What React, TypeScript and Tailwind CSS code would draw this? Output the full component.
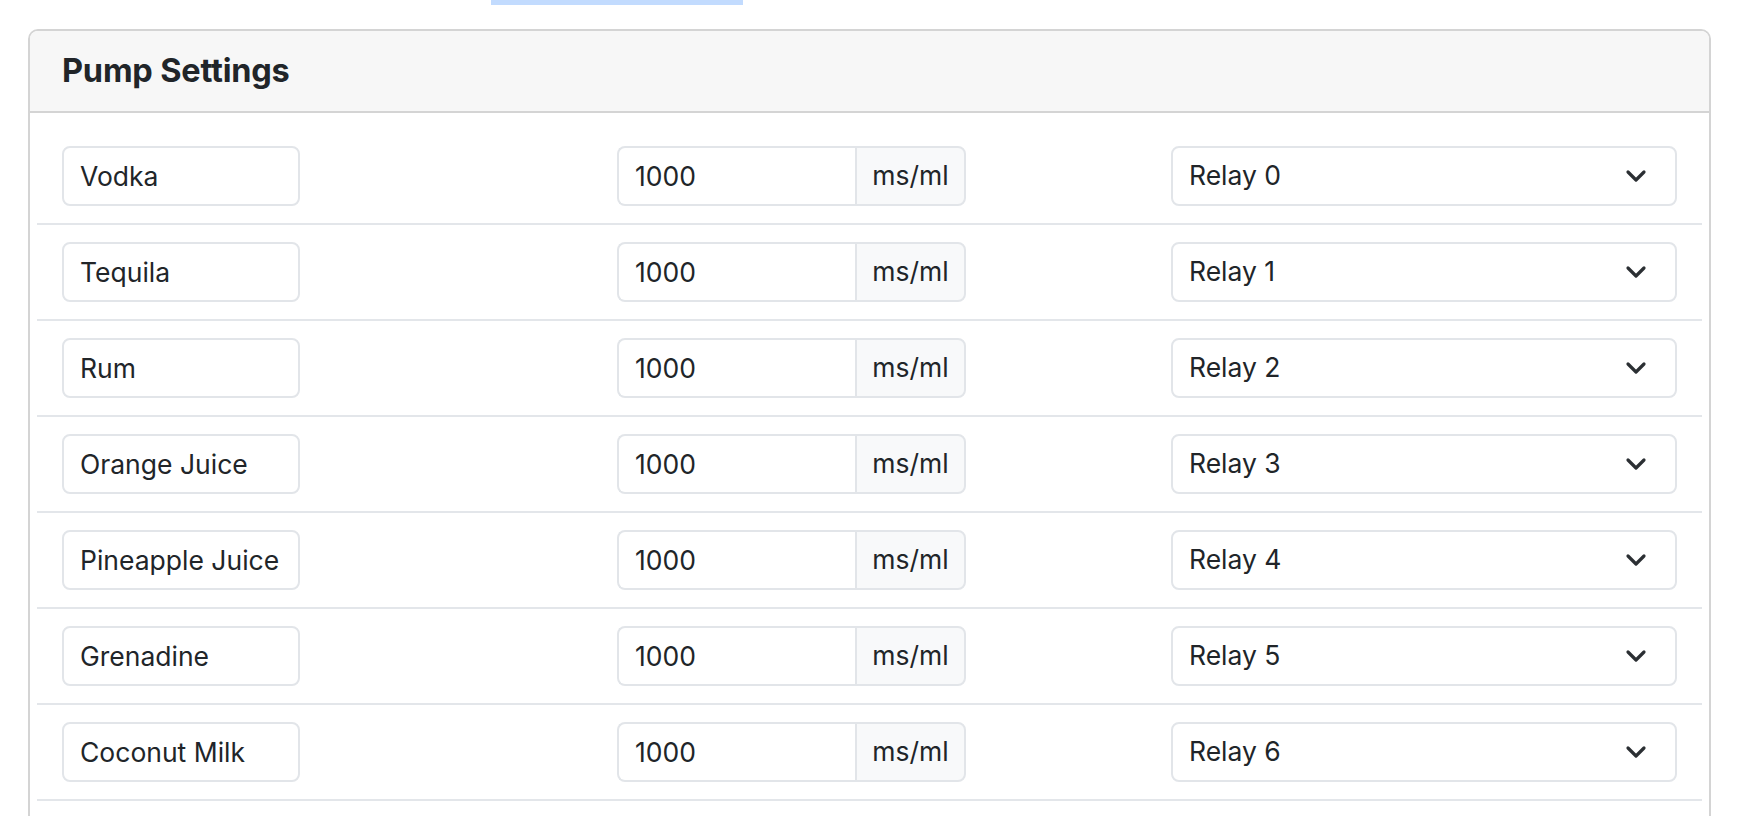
import { ChevronDown } from "lucide-react"

const pumps = [
  { name: "Vodka", relay: "Relay 0" },
  { name: "Tequila", relay: "Relay 1" },
  { name: "Rum", relay: "Relay 2" },
  { name: "Orange Juice", relay: "Relay 3" },
  { name: "Pineapple Juice", relay: "Relay 4" },
  { name: "Grenadine", relay: "Relay 5" },
  { name: "Coconut Milk", relay: "Relay 6" },
]

export default function App() {
  return (
    <div className="min-h-screen bg-white pl-[28px] pr-[29px] text-[#212529] font-['Inter','Noto_Sans',sans-serif]">
      {/* highlight left over from the nav above */}
      <div className="ml-[463px] h-[5px] w-[252px] bg-[#c2dbfe]" />

      <div className="mt-[24px] rounded-[10px] border-2 border-[#d4d4d4] bg-white">
        <div className="flex h-[82px] items-center rounded-t-[8px] border-b-2 border-[#d4d4d4] bg-[#f7f7f7] px-[32px]">
          <h5 className="text-[32.5px] font-bold tracking-[-0.2px]">Pump Settings</h5>
        </div>

        <div className="px-[7px] pt-[16px] pb-[40px]">
          {pumps.map((p) => (
            <div
              key={p.name}
              className="grid grid-cols-[555px_554px_1fr] items-center border-b-2 border-[#e3e6ea] px-[25px] py-[17px]"
            >
              <input
                defaultValue={p.name}
                readOnly
                className="h-[60px] w-[238px] rounded-[8px] border-2 border-[#e2e5e9] bg-white px-[16px] text-[26.5px] outline-none"
              />

              <div className="flex h-[60px] w-[349px]">
                <input
                  defaultValue="1000"
                  readOnly
                  className="h-full w-[238px] rounded-l-[8px] border-2 border-r-0 border-[#e2e5e9] bg-white px-[16px] text-[26.5px] outline-none"
                />
                <span className="flex h-full flex-1 items-center justify-center rounded-r-[8px] border-2 border-[#e2e5e9] bg-[#f8f9fa] text-[26.5px]">
                  ms/ml
                </span>
              </div>

              <div className="relative h-[60px]">
                <select
                  defaultValue={p.relay}
                  className="h-full w-full appearance-none rounded-[8px] border-2 border-[#e2e5e9] bg-white pl-[16px] text-[26.5px] outline-none"
                >
                  {Array.from({ length: 8 }, (_, i) => (
                    <option key={i}>Relay {i}</option>
                  ))}
                </select>
                <ChevronDown
                  className="pointer-events-none absolute right-[25px] top-1/2 h-[32px] w-[32px] -translate-y-1/2 text-[#2b2f33]"
                  strokeWidth={2.4}
                />
              </div>
            </div>
          ))}
        </div>
      </div>
    </div>
  )
}
